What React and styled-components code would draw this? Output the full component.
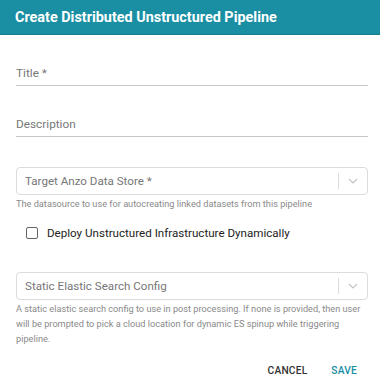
import styled, { createGlobalStyle } from "styled-components";
import { useState } from "react";

const GlobalStyle = createGlobalStyle`
  body {
    margin: 0;
    background: #ffffff;
    font-family: Roboto, "Liberation Sans", sans-serif;
  }
`;

const Chevron = () => (
  <svg width="12" height="8" viewBox="0 0 12 8">
    <path d="M2 2l4 4 4-4" fill="none" stroke="#c4c4c4" strokeWidth="1.2" />
  </svg>
);

const SelectField = ({ label, top }) => (
  <SelectBox $top={top}>
    <SelectLabel>{label}</SelectLabel>
    <Indicator>
      <Separator />
      <Chevron />
    </Indicator>
  </SelectBox>
);

const App = () => {
  const [deploy, setDeploy] = useState(false);

  return (
    <Dialog>
      <GlobalStyle />
      <Header>Create Distributed Unstructured Pipeline</Header>
      <Body>
        <TextField $top={23}>Title *</TextField>
        <TextField $top={23}>Description</TextField>
        <SelectField label="Target Anzo Data Store *" top={30} />
        <Helper>The datasource to use for autocreating linked datasets from this pipeline</Helper>
        <CheckRow onClick={() => setDeploy(!deploy)}>
          <Box $checked={deploy} />
          <CheckLabel>Deploy Unstructured Infrastructure Dynamically</CheckLabel>
        </CheckRow>
        <SelectField label="Static Elastic Search Config" top={32} />
        <Helper>
          A static elastic search config to use in post processing. If none is provided, then user
          will be prompted to pick a cloud location for dynamic ES spinup while triggering pipeline.
        </Helper>
      </Body>
      <Actions>
        <Button>CANCEL</Button>
        <Button $primary>SAVE</Button>
      </Actions>
    </Dialog>
  );
};

export default App;

const Dialog = styled.div`
  width: 380px;
  height: 386px;
  display: flex;
  flex-direction: column;
  background: #fff;
`;

const Header = styled.div`
  height: 34px;
  flex-shrink: 0;
  display: flex;
  align-items: center;
  padding: 0 15px;
  background: #1a8fa3;
  border-bottom: 1px solid #167c8e;
  color: #fff;
  font-size: 14.4px;
  font-weight: 700;
`;

const Body = styled.div`
  display: flex;
  flex-direction: column;
  padding: 0 12px 0 16px;
`;

const TextField = styled.div`
  margin-top: ${(p) => p.$top}px;
  height: 28px;
  display: flex;
  align-items: flex-end;
  padding-bottom: 4px;
  box-sizing: border-box;
  border-bottom: 1px solid #c6c6c6;
  color: #777;
  font-size: 11.8px;
  line-height: 15px;
`;

const SelectBox = styled.div`
  margin-top: ${(p) => p.$top}px;
  height: 28px;
  box-sizing: border-box;
  border: 1px solid #dcdcdc;
  border-radius: 4px;
  display: flex;
  align-items: center;
  padding-left: 8px;
`;

const SelectLabel = styled.div`
  flex: 1;
  color: #777;
  font-size: 11.6px;
`;

const Indicator = styled.div`
  display: flex;
  align-items: center;
  gap: 8px;
  padding-right: 8px;
`;

const Separator = styled.div`
  width: 1px;
  height: 16px;
  background: #dcdcdc;
`;

const Helper = styled.div`
  margin-top: 1px;
  color: #8a8a8a;
  font-size: 9.2px;
  line-height: 15px;
`;

const CheckRow = styled.div`
  display: flex;
  align-items: center;
  gap: 9px;
  margin-top: 15px;
  padding-left: 10px;
  cursor: pointer;
`;

const Box = styled.div`
  width: 10px;
  height: 10px;
  border: 1.5px solid #666;
  border-radius: 2px;
  background: ${(p) => (p.$checked ? "#1a8fa3" : "#fff")};
`;

const CheckLabel = styled.div`
  color: #222;
  font-size: 11.6px;
`;

const Actions = styled.div`
  margin-top: auto;
  display: flex;
  justify-content: flex-end;
  gap: 24px;
  padding: 0 23px 8px 0;
`;

const Button = styled.div`
  font-size: 10.2px;
  font-weight: 500;
  line-height: 15px;
  letter-spacing: 0.2px;
  color: ${(p) => (p.$primary ? "#1a8fa3" : "#333")};
  cursor: pointer;
`;
